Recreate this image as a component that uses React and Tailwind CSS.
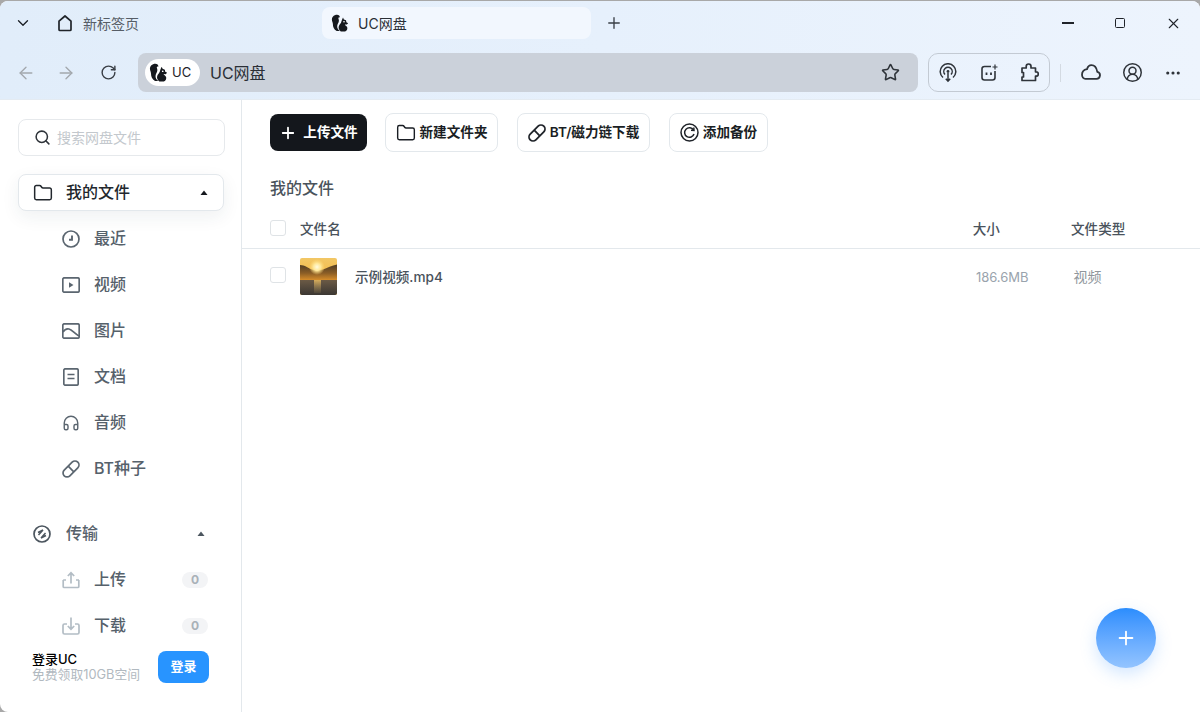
import React from "react";
import { ChevronDown, ArrowLeft, ArrowRight, RotateCw, Star, Plus, Square, X, Search, Folder, Headphones, CircleUserRound, Ellipsis } from "lucide-react";

const Squirrel = ({ className }) => (
  <svg viewBox="0 0 18 18" className={className} fill="#15181d">
    <path d="M6 .8C3 .8.8 3 .9 5.800c.1 1.700 1 2.700 1 4.400 0 2.600 1 5.200 3.800 6.800h3.300C7 15.800 6 14 6.200 12c.2-2 1.600-3.200 1.700-5.200.1-1.200-.6-1.800-.5-2.700.1-.8 1-1 1.500-.4C9 2 7.800.8 6 .8Z" />
    <path d="M12 3.600 12.900 5.500 15 6.300l.4 1.900 1.800 1-1.400 1.400-2-.2c.4 1 1.600 1.500 2.300 2.600.8 1.500-.2 4-2 4.500H9.800C8 16 7.200 14 7.800 12.200c.5-1.500 1.600-2.300 2.300-3.700.6-1.300.8-3 1.900-4.900Z" />
    <circle cx="13" cy="7.800" r=".8" fill="#fff" />
  </svg>
);

const Home = () => (
  <svg viewBox="0 0 18 18" className="h-[18px] w-[18px]" fill="none" stroke="#1f2329" strokeWidth="1.700" strokeLinejoin="round">
    <path d="M9 2 3 7.200v8.300a1 1 0 0 0 1 1h10a1 1 0 0 0 1-1V7.200Z" />
  </svg>
);
const Clock = () => (
  <svg viewBox="0 0 18 18" className="h-[18px] w-[18px]" fill="none" stroke="#5b6670" strokeWidth="1.700">
    <circle cx="9" cy="9" r="8" />
    <path d="M10 5.500v4.200H7" strokeWidth="1.900" />
  </svg>
);
const Video = () => (
  <svg viewBox="0 0 18 16" className="h-4 w-[18px]" fill="none" stroke="#5b6670" strokeWidth="1.700">
    <rect x=".8" y=".8" width="16.400" height="14.400" rx="1.500" />
    <path d="M7 5.200 11.500 8 7 10.800Z" fill="#5b6670" stroke="none" />
  </svg>
);
const ImageIcon = () => (
  <svg viewBox="0 0 18 16" className="h-4 w-[18px]" fill="none" stroke="#5b6670" strokeWidth="1.700">
    <rect x=".8" y=".8" width="16.400" height="14.400" rx="1.500" />
    <path d="M1 9c1.600-2.600 3.500-3.600 6-3 3 .7 5.500 4.500 10 7" />
  </svg>
);
const Doc = () => (
  <svg viewBox="0 0 16 18" className="h-[18px] w-4" fill="none" stroke="#5b6670" strokeWidth="1.700">
    <rect x=".8" y=".8" width="14.400" height="16.400" rx="1.500" />
    <path d="M4.500 6.500h7M4.500 10.500h7" />
  </svg>
);
const Link = ({ stroke = "#5b6670", cls = "h-[18px] w-[18px]", w = "1.700" }) => (
  <svg viewBox="0 0 18 18" className={cls} fill="none" stroke={stroke} strokeWidth={w}>
    <rect x="-.6" y="5" width="19.200" height="8" rx="4" transform="rotate(-45 9 9)" />
    <path d="m6.200 6.200 5.600 5.600" />
  </svg>
);
const Transfer = () => (
  <svg viewBox="0 0 18 18" className="h-[18px] w-[18px]" fill="none" stroke="#4c565f" strokeWidth="1.700">
    <circle cx="9" cy="9" r="8" />
    <path d="M5 7.500 10 5 5.500 10M13 10.500 8 13l4.500-5" strokeWidth="1.500" />
  </svg>
);
const Backup = () => (
  <svg viewBox="0 0 19 19" className="h-[19px] w-[19px]" fill="none" stroke="#1f2329" strokeWidth="1.500">
    <circle cx="9.500" cy="9.500" r="8.500" />
    <path d="M13.500 7A4.800 4.800 0 1 0 14 11" />
    <path d="m11 7.300 3 .2-.2-3" />
  </svg>
);
const UploadTray = () => (
  <svg viewBox="0 0 18 18" className="h-[18px] w-[18px]" fill="none" stroke="#b3bdc5" strokeWidth="1.700">
    <path d="M1.200 9v6.500a1 1 0 0 0 1 1h13.600a1 1 0 0 0 1-1V9" />
    <path d="M1.200 9H4M17 9h-3" />
    <path d="M9 12.500V2M5.800 5 9 1.800 12.200 5" />
  </svg>
);
const DownloadTray = () => (
  <svg viewBox="0 0 18 18" className="h-[18px] w-[18px]" fill="none" stroke="#b3bdc5" strokeWidth="1.700">
    <path d="M5 7H2.500a1.500 1.500 0 0 0-1.500 1.500v7A1.500 1.500 0 0 0 2.500 17h13a1.500 1.500 0 0 0 1.500-1.500v-7A1.500 1.500 0 0 0 15.500 7H13" />
    <path d="M9 .5v11.500M5.800 9 9 12.200 12.200 9" />
  </svg>
);
const CloudIcon = () => (
  <svg viewBox="0 0 20 16" className="h-4 w-5" fill="none" stroke="#2f343a" strokeWidth="1.800" strokeLinejoin="round">
    <path d="M4.500 14.800h11a3.500 3.500 0 0 0 .8-6.900C15.600 4 13.400 1.200 10.400 1.200c-2.300 0-3.700 1.600-4.400 4C3 5.800 1 8 1 10.800c0 2.200 1.500 4 3.500 4Z" />
  </svg>
);
const PuzzleIcon = () => (
  <svg viewBox="0 0 19 19" className="h-[19px] w-[19px]" fill="none" stroke="#2f343a" strokeWidth="1.700" strokeLinejoin="round">
    <path d="M2 5h4.200V3.400a2.400 2.400 0 0 1 4.800 0V5h4.500v3.800h.6a2.200 2.200 0 0 1 0 4.400h-.6V17.500H2V14h1.500v-4.500H2Z" />
  </svg>
);
const Caret = ({ color = "#15181d" }) => (
  <svg viewBox="0 0 8 6" className="h-[6px] w-2" fill={color}><path d="M4 .5 7.500 5H.5Z" /></svg>
);
const Thumb = () => (
  <svg viewBox="0 0 37 37" className="h-[37px] w-[37px] rounded-[2px]">
    <defs>
      <linearGradient id="s" x1="0" y1="0" x2="0" y2="1">
        <stop offset="0" stopColor="#f2c765" /><stop offset="1" stopColor="#f5ad2c" />
      </linearGradient>
      <linearGradient id="w" x1="0" y1="0" x2="0" y2="1">
        <stop offset="0" stopColor="#6b5a45" /><stop offset="1" stopColor="#3b3733" />
      </linearGradient>
      <linearGradient id="h" x1="0" y1="0" x2="0" y2="1">
        <stop offset="0" stopColor="#4f3c24" /><stop offset=".55" stopColor="#8a5d26" /><stop offset="1" stopColor="#d58c2a" />
      </linearGradient>
      <radialGradient id="g"><stop offset="0" stopColor="#fffbe0" /><stop offset=".45" stopColor="#ffe89a" /><stop offset="1" stopColor="#ffd873" stopOpacity="0" /></radialGradient>
      <linearGradient id="r" x1="0" y1="0" x2="0" y2="1">
        <stop offset="0" stopColor="#f0c060" stopOpacity=".8" /><stop offset="1" stopColor="#a08a5c" stopOpacity=".15" />
      </linearGradient>
    </defs>
    <rect width="37" height="37" fill="url(#s)" />
    <path d="M0 7c5 0 8 3 12 4.500 3 1 8 1 11 0 4-1.500 9-4 14-5V22H0Z" fill="url(#h)" />
    <circle cx="17" cy="9" r="8" fill="url(#g)" />
    <rect y="22" width="37" height="15" fill="url(#w)" />
    <rect x="14" y="22" width="7" height="13" fill="url(#r)" />
  </svg>
);

const NavItem = ({ icon, label, badge }) => (
  <div className="flex h-[46px] items-center pl-[61px] pr-[33px]">
    <span className="flex w-[19px] justify-center">{icon}</span>
    <span className="mb-[2px] ml-[14px] text-[16px] font-medium text-[#56616b]">{label}</span>
    {badge !== undefined && (
      <span className="ml-auto flex h-4 w-[26px] items-center justify-center rounded-full bg-[#f3f4f6] text-[12px] font-bold text-[#a9b1b8]">{badge}</span>
    )}
  </div>
);

const OutlineBtn = ({ icon, label, cls }) => (
  <button className={`flex h-[39px] items-center justify-center gap-[4px] rounded-lg border border-[#e3e8ec] bg-white text-[13.6px] font-semibold text-[#1a1e24] ${cls}`}>
    {icon}
    <span>{label}</span>
  </button>
);

export default function App() {
  return (
    <div className="h-[712px] w-[1200px] overflow-hidden bg-[#a8a8a8] pt-px font-['Inter','Noto_Sans_CJK_SC',sans-serif]">
      <div className="flex h-[711px] flex-col overflow-hidden rounded-t-lg rounded-bl-lg bg-white">
        <header className="h-[99px] shrink-0 border-b border-[#e4ebf2] bg-gradient-to-r from-[#e1edfa] via-[#e6f0fc] to-[#edf4fd]">
          <div className="flex h-[44px] items-center">
            <ChevronDown className="ml-[14px] h-[18px] w-[18px] text-[#1f2329]" strokeWidth={1.8} />
            <span className="ml-[24px]"><Home /></span>
            <span className="ml-[9px] text-[14px] text-[#565d66]">新标签页</span>
            <div className="ml-[183px] flex h-[32px] w-[269px] items-center rounded-lg bg-[#f2f7fe] pl-[9px]">
              <Squirrel className="h-[18px] w-[18px]" />
              <span className="ml-[9px] text-[14px] text-[#2a2f36]">UC网盘</span>
            </div>
            <Plus className="ml-[14px] h-[18px] w-[18px] text-[#3a3f46]" strokeWidth={1.8} />
            <div className="ml-[439px] h-[1.500px] w-[12px] bg-[#1f2329]" />
            <Square className="ml-[40px] h-[12px] w-[12px] text-[#1f2329]" strokeWidth={2} />
            <X className="ml-[39px] h-[17px] w-[17px] text-[#1f2329]" strokeWidth={1.5} />
          </div>
          <div className="flex h-[54px] items-start pt-[8px]">
            <div className="flex h-[39px] w-[138px] items-center">
              <ArrowLeft className="ml-[16px] h-[20px] w-[20px] text-[#a3a8ad]" strokeWidth={1.6} />
              <ArrowRight className="ml-[20px] h-[20px] w-[20px] text-[#a3a8ad]" strokeWidth={1.6} />
              <RotateCw className="ml-[24px] h-[17px] w-[17px] text-[#3a3f46]" strokeWidth={2} />
            </div>
            <div className="flex h-[39px] w-[780px] items-center rounded-lg bg-[#cbd1da] pl-[7px] pr-[18px]">
              <div className="flex h-[27px] w-[55px] items-center rounded-full bg-white pl-[4px]">
                <Squirrel className="h-[19px] w-[19px]" />
                <span className="ml-[4px] text-[13px] text-[#1f2329]">UC</span>
              </div>
              <span className="ml-[10px] text-[16px] text-[#2a2f36]">UC网盘</span>
              <Star className="ml-auto h-[19px] w-[19px] text-[#2f343a]" strokeWidth={2} />
            </div>
            <div className="ml-[10px] flex h-[39px] w-[122px] items-center justify-between rounded-[10px] border border-[#c3cad3] px-[10px]">
              <svg viewBox="0 0 18 20" className="h-5 w-[18px]" fill="none" stroke="#2f343a" strokeWidth="1.500">
                <path d="M4 14.500a7.800 7.800 0 1 1 10 0" />
                <path d="M6 11.500a4.200 4.200 0 1 1 6 0" />
                <circle cx="9" cy="8.500" r="1.400" fill="#2f343a" stroke="none" />
                <path d="M9 10v8M6.800 15.800 9 18.200l2.200-2.400" />
              </svg>
              <svg viewBox="0 0 18 18" className="h-[18px] w-[18px]" fill="none" stroke="#2f343a" strokeWidth="1.600">
                <path d="M11 2.500H4.500A2.500 2.500 0 0 0 2 5v8.500A2.500 2.500 0 0 0 4.500 16h8a2.500 2.500 0 0 0 2.500-2.500V7" />
                <path d="M6.500 8.500v2.500M11 8.500v2.500" strokeWidth="1.800" />
                <path d="M15 0.500v5M12.500 3h5" strokeWidth="1.200" />
              </svg>
              <PuzzleIcon />
            </div>
            <div className="ml-[10px] mt-[11px] h-[18px] w-px bg-[#d3dae2]" />
            <span className="ml-[20px] mt-[11px]"><CloudIcon /></span>
            <CircleUserRound className="ml-[21px] mt-[9px] h-[21px] w-[21px] text-[#2f343a]" strokeWidth={1.7} />
            <Ellipsis className="ml-[21px] mt-[11px] h-[18px] w-[18px] text-[#2f343a]" strokeWidth={2.2} />
          </div>
        </header>

        <div className="flex min-h-0 flex-1">
          <aside className="flex w-[242px] shrink-0 flex-col border-r border-[#e3e8ec] pt-[19px]">
            <div className="ml-[18px] flex h-[37px] w-[207px] items-center rounded-lg border border-[#e6e9ec] pl-[15px]">
              <Search className="h-[17px] w-[17px] text-[#2f343a]" strokeWidth={2.2} />
              <span className="ml-[6px] text-[14px] text-[#c3c8cd]">搜索网盘文件</span>
            </div>
            <div className="ml-[18px] mt-[18px] flex h-[37px] w-[206px] items-center rounded-lg border border-[#e3e8ec] bg-white pl-[14px] pr-[15px] shadow-[0_6px_18px_rgba(30,50,70,0.07)]">
              <Folder className="h-[20px] w-[20px] text-[#22272d]" strokeWidth={1.8} />
              <span className="mb-[2px] ml-[13px] text-[16px] font-medium text-[#22272d]">我的文件</span>
              <span className="ml-auto"><Caret /></span>
            </div>
            <div className="mt-[5px]">
              <NavItem icon={<Clock />} label="最近" />
              <NavItem icon={<Video />} label="视频" />
              <NavItem icon={<ImageIcon />} label="图片" />
              <NavItem icon={<Doc />} label="文档" />
              <NavItem icon={<Headphones className="h-[18px] w-[18px] text-[#5b6670]" strokeWidth={1.9} />} label="音频" />
              <NavItem icon={<Link />} label="BT种子" />
            </div>
            <div className="mt-[19px] flex h-[46px] items-center pl-[33px] pr-[36px]">
              <Transfer />
              <span className="mb-[2px] ml-[15px] text-[16px] font-medium text-[#56616b]">传输</span>
              <span className="ml-auto"><Caret color="#4c565f" /></span>
            </div>
            <NavItem icon={<UploadTray />} label="上传" badge={0} />
            <NavItem icon={<DownloadTray />} label="下载" badge={0} />
            <div className="mt-[2px] flex h-[32px] items-center pl-[32px] pr-[32px]">
              <div className="flex flex-col">
                <span className="text-[13px] font-medium leading-[15px] text-black">登录UC</span>
                <span className="text-[12.800px] leading-[15px] text-[#b1b9c0]">免费领取10GB空间</span>
              </div>
              <button className="ml-auto h-[32px] w-[51px] rounded-lg bg-[#2894ff] text-[13px] font-semibold text-white">登录</button>
            </div>
          </aside>

          <main className="relative min-w-0 flex-1">
            <div className="flex items-center pl-[28px] pt-[13px]">
              <button className="flex h-[37px] w-[97px] items-center justify-center gap-[6px] rounded-lg bg-[#14171c] text-[13.6px] font-semibold text-white">
                <Plus className="h-[18px] w-[18px]" strokeWidth={2.4} />
                <span>上传文件</span>
              </button>
              <OutlineBtn cls="ml-[18px] w-[113px]" icon={<Folder className="h-[20px] w-[20px]" strokeWidth={1.7} />} label="新建文件夹" />
              <OutlineBtn cls="ml-[19px] w-[133px]" icon={<Link stroke="#1f2329" w="1.800" />} label="BT/磁力链下载" />
              <OutlineBtn cls="ml-[19px] w-[99px]" icon={<Backup />} label="添加备份" />
            </div>
            <h2 className="ml-[28px] mt-[25px] text-[16px] font-medium leading-[22px] text-[#4a535c]">我的文件</h2>
            <div className="mt-[21px] flex h-[29px] items-start border-b border-[#e3e8ec] pl-[28px]">
              <span className="h-4 w-4 rounded-[3px] border border-[#dfe3e6] bg-white" />
              <span className="ml-[14px] text-[13.600px] font-medium leading-[18px] text-[#4a535c]">文件名</span>
              <span className="ml-[632px] text-[13.600px] font-medium leading-[18px] text-[#4a535c]">大小</span>
              <span className="ml-[71px] text-[13.600px] font-medium leading-[18px] text-[#4a535c]">文件类型</span>
            </div>
            <div className="flex items-start pl-[28px] pt-[9px]">
              <span className="mt-[9px] h-4 w-4 rounded-[3px] border border-[#dfe3e6] bg-white" />
              <span className="ml-[14px]"><Thumb /></span>
              <span className="ml-[18px] mt-[10px] text-[13.600px] font-medium leading-[18px] text-[#4a535c]">示例视频.mp4</span>
              <span className="ml-[533px] mt-[10px] text-[13px] leading-[18px] text-[#99a3ad]">186.6MB</span>
              <span className="ml-[45px] mt-[10px] text-[14px] leading-[18px] text-[#8f969c]">视频</span>
            </div>
            <button className="absolute left-[854px] top-[508px] flex h-[60px] w-[60px] items-center justify-center rounded-full bg-gradient-to-b from-[#2a8dfd] to-[#93c4ff] shadow-[0_6px_16px_rgba(80,160,255,0.25)]">
              <Plus className="h-[22px] w-[22px] text-white" strokeWidth={2} />
            </button>
          </main>
        </div>
      </div>
    </div>
  );
}
